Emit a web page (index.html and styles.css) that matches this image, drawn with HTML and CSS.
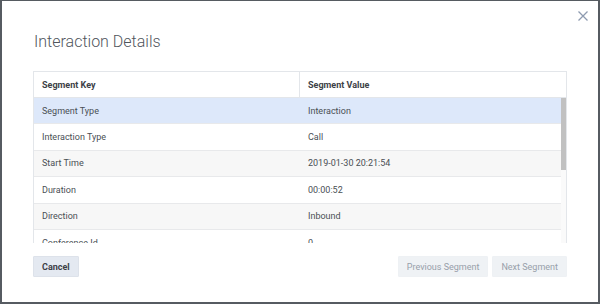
FILE: index.html
```html
<!DOCTYPE html>
<html lang="en">
  <head>
    <meta charset="UTF-8" />
    <meta name="viewport" content="width=device-width, initial-scale=1.0" />
    <title>Interaction Details</title>
    <link rel="stylesheet" href="styles.css">
  </head>
  <body>
    <div class="modal">
      <button class="close" aria-label="Close">
        <svg width="10" height="10" viewBox="0 0 10 10">
          <path d="M0.5 0.5 L9.5 9.5 M9.5 0.5 L0.5 9.5" stroke="#8e9bb0" stroke-width="1.3" fill="none" />
        </svg>
      </button>

      <h1>Interaction Details</h1>

      <div class="table">
        <div class="head">
          <div class="cell">Segment Key</div>
          <div class="cell">Segment Value</div>
        </div>
        <div class="body">
          <div class="rows">
            <div class="row selected"><div class="cell">Segment Type</div><div class="cell">Interaction</div></div>
            <div class="row"><div class="cell">Interaction Type</div><div class="cell">Call</div></div>
            <div class="row"><div class="cell">Start Time</div><div class="cell">2019-01-30 20:21:54</div></div>
            <div class="row"><div class="cell">Duration</div><div class="cell">00:00:52</div></div>
            <div class="row"><div class="cell">Direction</div><div class="cell">Inbound</div></div>
            <div class="row"><div class="cell">Conference Id</div><div class="cell">0</div></div>
            <div class="row"><div class="cell">Queue</div><div class="cell">Support</div></div>
            <div class="row"><div class="cell">Agent</div><div class="cell">-</div></div>
            <div class="row"><div class="cell">Disconnect Type</div><div class="cell">Peer</div></div>
            <div class="row"><div class="cell">End Time</div><div class="cell">2019-01-30 20:22:46</div></div>
          </div>
          <div class="scrollbar"><div class="thumb"></div></div>
        </div>
      </div>

      <div class="footer">
        <button class="btn">Cancel</button>
        <div class="nav">
          <button class="btn disabled">Previous Segment</button>
          <button class="btn disabled">Next Segment</button>
        </div>
      </div>
    </div>
  </body>
</html>
```

FILE: styles.css
```css
html,
body {
  margin: 0;
  height: 100%;
}

body {
  font-family: Roboto, "Liberation Sans", sans-serif;
  background: #565b61;
}

.modal {
  position: relative;
  box-sizing: border-box;
  margin: 1px 2px 2px 2px;
  height: calc(100% - 3px);
  background: #fff;
  padding: 31px 31px 0 31px;
  display: flex;
  flex-direction: column;
}

.close {
  position: absolute;
  top: 10px;
  right: 10px;
  border: 0;
  background: none;
  padding: 0;
  width: 10px;
  height: 10px;
  display: flex;
}

h1 {
  margin: 0 0 19px 1px;
  font-size: 16px;
  line-height: 20px;
  font-weight: 300;
  color: #50555c;
}

.table {
  border: 1px solid #e3e6ea;
  border-bottom: 0;
  font-size: 9px;
  color: #4a4f55;
}

.head {
  display: grid;
  grid-template-columns: 265px 1fr;
  height: 25px;
  border-bottom: 1px solid #e3e6ea;
  font-weight: 700;
  color: #3d4147;
}

.head .cell + .cell {
  border-left: 1px solid #e3e6ea;
}

.cell {
  display: flex;
  align-items: center;
  padding-left: 8px;
  white-space: nowrap;
}

.body {
  display: flex;
  height: 145px;
  overflow: hidden;
}

.rows {
  flex: 1;
}

.row {
  display: grid;
  grid-template-columns: 266px 1fr;
  height: 25.4px;
  border-bottom: 1px solid #e8e9eb;
}

.row:nth-child(odd) {
  background: #f7f7f7;
}

.row.selected {
  background: #dde8fa;
}

.scrollbar {
  width: 5px;
  background: #fafafa;
}

.thumb {
  height: 72px;
  background: #c1c1c1;
}

.footer {
  display: flex;
  justify-content: space-between;
  margin-top: 13px;
}

.nav {
  display: flex;
  gap: 4px;
}

.btn {
  height: 21px;
  padding: 0 8px;
  border: 1px solid #dde2ea;
  border-radius: 1px;
  background: #e4e9f1;
  font-family: inherit;
  font-size: 9px;
  font-weight: 700;
  color: #3c4047;
}

.btn.disabled {
  background: #eff2f5;
  border-color: #eef1f4;
  font-weight: 400;
  color: #98a0aa;
}
```
